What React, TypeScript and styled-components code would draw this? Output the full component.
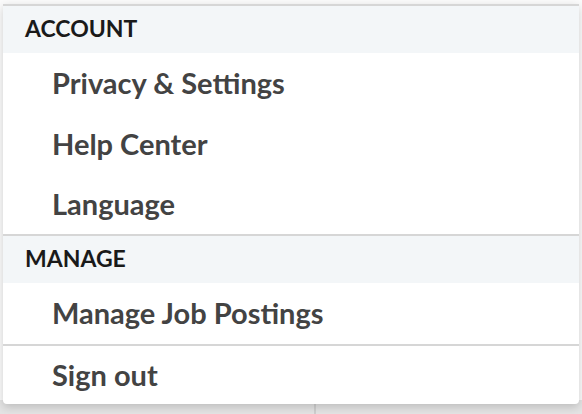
import React from "react";
import styled, { createGlobalStyle } from "styled-components";

const Global = createGlobalStyle`
  html, body { margin: 0; padding: 0; }
  body { font-family: Lato, "Liberation Sans", sans-serif; background: #ffffff; }
`;

const Stage = styled.div`
  position: relative;
  width: 582px;
  height: 414px;
  overflow: hidden;
  background: #ffffff;
`;

const Backdrop = styled.div`
  display: flex;
  flex-direction: column;
  height: 100%;
`;

const BackTop = styled.div`
  flex: 1;
  background: #fbfbfb;
`;

const BackBottom = styled.div`
  height: 14px;
  display: grid;
  grid-template-columns: 314px 2px 1fr;
  background: #e4e4e4;
`;

const BackDivider = styled.div`
  background: #cfcfcf;
`;

const Menu = styled.nav`
  position: absolute;
  left: 3px;
  top: 4px;
  width: 576px;
  background: #ffffff;
  border-top: 2px solid #d6d6d6;
  border-radius: 0 0 4px 4px;
  box-shadow: 0 3px 10px rgba(0, 0, 0, 0.18);
  display: flex;
  flex-direction: column;
  overflow: hidden;
`;

const SectionHeader = styled.div<{ $divider?: boolean }>`
  box-sizing: border-box;
  display: flex;
  align-items: center;
  padding-left: 22px;
  padding-bottom: 3px;
  background: #f3f6f8;
  border-top: ${(p) => (p.$divider ? "2px solid #d6d6d6" : "none")};
  height: ${(p) => (p.$divider ? "49px" : "47px")};
  color: #1a1a1a;
  font-weight: 700;
  font-size: 23px;
  letter-spacing: 0;
`;

const Item = styled.a<{ $divider?: boolean; $h?: number }>`
  display: flex;
  align-items: center;
  box-sizing: border-box;
  height: ${(p) => p.$h ?? 60}px;
  padding-left: 49px;
  padding-bottom: 2px;
  color: #434343;
  font-weight: 700;
  font-size: 29px;
  text-decoration: none;
  border-top: ${(p) => (p.$divider ? "2px solid #d6d6d6" : "none")};
`;

export default function App() {
  return (
    <>
      <Global />
      <Stage>
        <Backdrop>
          <BackTop />
          <BackBottom>
            <div />
            <BackDivider />
            <div />
          </BackBottom>
        </Backdrop>
        <Menu>
          <SectionHeader>ACCOUNT</SectionHeader>
          <Item $h={61}>Privacy &amp; Settings</Item>
          <Item>Help Center</Item>
          <Item>Language</Item>
          <SectionHeader $divider>MANAGE</SectionHeader>
          <Item $h={61}>Manage Job Postings</Item>
          <Item $divider $h={60}>Sign out</Item>
        </Menu>
      </Stage>
    </>
  );
}
